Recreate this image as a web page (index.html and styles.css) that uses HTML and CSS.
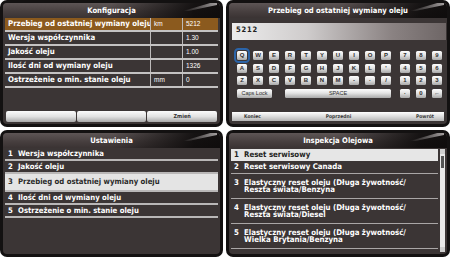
FILE: index.html
```html
<!DOCTYPE html>
<html lang="pl">
<head>
<meta charset="utf-8">
<title>Inspekcja olejowa</title>
<link rel="stylesheet" href="styles.css">
</head>
<body>
<div class="screen">
  <section class="panel">
    <div class="inner">
      <div class="title">Konfiguracja</div>
      <div class="table">
        <div class="trow sel"><span class="c-label">Przebieg od ostatniej wymiany oleju</span><span class="c-unit">km</span><span class="c-val">5212</span></div>
        <div class="trow"><span class="c-label">Wersja współczynnika</span><span class="c-unit"></span><span class="c-val">1.30</span></div>
        <div class="trow"><span class="c-label">Jakość oleju</span><span class="c-unit"></span><span class="c-val">1.00</span></div>
        <div class="trow"><span class="c-label">Ilość dni od wymiany oleju</span><span class="c-unit"></span><span class="c-val">1326</span></div>
        <div class="trow"><span class="c-label">Ostrzeżenie o min. stanie oleju</span><span class="c-unit">mm</span><span class="c-val">0</span></div>
      </div>
      <div class="btnbar"><span class="btn"></span><span class="btn"></span><span class="btn">Zmień</span></div>
    </div>
  </section>

  <section class="panel">
    <div class="inner">
      <div class="title">Przebieg od ostatniej wymiany oleju</div>
      <div class="input">5212</div>
      <div class="keyboard">
        <div class="letters">
          <span class="key focus">Q</span><span class="key">W</span><span class="key">E</span><span class="key">R</span><span class="key">T</span><span class="key">Y</span><span class="key">U</span><span class="key">I</span><span class="key">O</span><span class="key">P</span>
          <span class="key">A</span><span class="key">S</span><span class="key">D</span><span class="key">F</span><span class="key">G</span><span class="key">H</span><span class="key">J</span><span class="key">K</span><span class="key">L</span><span class="key">'</span>
          <span class="key">Z</span><span class="key">X</span><span class="key">C</span><span class="key">V</span><span class="key">B</span><span class="key">N</span><span class="key">M</span><span class="key">-</span><span class="key">·</span><span class="key">/</span>
          <span class="key caps">Caps Lock</span><span class="key space">SPACE</span>
        </div>
        <div class="numpad">
          <span class="key">7</span><span class="key">8</span><span class="key">9</span>
          <span class="key">4</span><span class="key">5</span><span class="key">6</span>
          <span class="key">1</span><span class="key">2</span><span class="key">3</span>
          <span class="key">·</span><span class="key">0</span><span class="key">←</span>
        </div>
      </div>
      <div class="navbar"><span>Koniec</span><span>Poprzedni</span><span>Powrót</span></div>
    </div>
  </section>

  <section class="panel">
    <div class="inner">
      <div class="title">Ustawienia</div>
      <ol class="menu">
        <li class="mrow"><span class="num">1</span>Wersja współczynnika</li>
        <li class="mrow"><span class="num">2</span>Jakość oleju</li>
        <li class="mrow sel"><span class="num">3</span>Przebieg od ostatniej wymiany oleju</li>
        <li class="mrow"><span class="num">4</span>Ilość dni od wymiany oleju</li>
        <li class="mrow"><span class="num">5</span>Ostrzeżenie o min. stanie oleju</li>
      </ol>
    </div>
  </section>

  <section class="panel">
    <div class="inner">
      <div class="title">Inspekcja Olejowa</div>
      <div class="listwrap">
        <ol class="ilist">
          <li class="irow sel"><div class="ibody"><span class="num">1</span><span>Reset serwisowy</span></div></li>
          <li class="irow"><div class="ibody"><span class="num">2</span><span>Reset serwisowy Canada</span></div></li>
          <li class="irow tall"><div class="ibody"><span class="num">3</span><span>Elastyczny reset oleju (Długa żywotność/<br>Reszta świata/Benzyna</span></div></li>
          <li class="irow tall"><div class="ibody"><span class="num">4</span><span>Elastyczny reset oleju (Długa żywotność/<br>Reszta świata/Diesel</span></div></li>
          <li class="irow tall"><div class="ibody"><span class="num">5</span><span>Elastyczny reset oleju (Długa żywotność/<br>Wielka Brytania/Benzyna</span></div></li>
        </ol>
        <div class="scrollbar"><span class="arrow up"></span><span class="thumb"></span><span class="track"></span><span class="arrow down"></span></div>
      </div>
    </div>
  </section>
</div>
</body>
</html>
```

FILE: styles.css
```css
* { box-sizing: border-box; margin: 0; padding: 0; }
html, body { background: #fff; }
body {
  width: 450px; height: 257px; overflow: hidden;
  font-family: "DejaVu Sans Condensed", "DejaVu Sans", sans-serif;
  font-weight: bold;
  color: #fff;
}
.screen {
  display: grid;
  grid-template-columns: 223px 224px;
  grid-template-rows: 127px 127px;
  gap: 3px;
}
.panel {
  background: #131111;
  border-radius: 7px;
  padding: 3px;
  display: flex;
  flex-direction: column;
}
.inner {
  flex: 1;
  background: #3b3535;
  border-radius: 4px;
  display: flex;
  flex-direction: column;
  overflow: hidden;
}
.title {
  height: 15px;
  flex: none;
  position: relative;
  color: #fff;
  font-size: 7.6px;
  line-height: 15px;
  text-align: center;
  white-space: nowrap;
  background:
    linear-gradient(to right, rgba(0,0,0,0) 50%, rgba(10,8,8,0.85) 88%, rgba(10,8,8,0.9) 100%),
    linear-gradient(to bottom, #5d5555 0%, #463e3e 60%, #3a3333 100%);
}
.title::after {
  content: "";
  position: absolute;
  right: 3px; top: 0;
  width: 34px; height: 8px;
  background: linear-gradient(to right, rgba(190,185,185,0) 0%, rgba(200,195,195,0.8) 100%);
  clip-path: polygon(0 100%, 80% 0, 100% 0, 100% 25%, 15% 100%);
}

/* Konfiguracja table */
.table { margin: 0 2px 0 2px; display: flex; flex-direction: column; }
.trow {
  display: grid;
  grid-template-columns: 146px 32px 1fr;
  height: 14px;
  border-bottom: 2px solid #c4c2c2;
  font-size: 7.8px;
  line-height: 12px;
  white-space: nowrap;
}
.trow > span { border-right: 1px solid #bdbaba; padding-left: 3px; overflow: hidden; }
.trow > span:last-child { border-right: none; }
.trow .c-unit, .trow .c-val { font-weight: normal; font-family: "Liberation Sans", sans-serif; font-size: 6.5px; }
.trow.sel { background: #8b5a1e; }
.btnbar {
  margin: auto 3px 2px 3px;
  display: grid;
  grid-template-columns: 1fr 1fr 1fr;
  gap: 1px;
  height: 11px;
}
.btn {
  background: linear-gradient(to bottom, #fbfbfb 0%, #e2e2e2 50%, #a9a9a9 100%);
  border-radius: 2px;
  color: #333;
  font-size: 5.5px;
  line-height: 11px;
  text-align: center;
}

/* keyboard panel */
.input {
  margin: 5px 1px 0 3px;
  height: 17px;
  flex: none;
  background: linear-gradient(to right, #ececec 0%, #cfcccc 35%, #8a8282 75%, #6e6666 100%);
  color: #222;
  font-size: 7.5px;
  letter-spacing: 0.8px;
  padding: 2px 0 0 4px;
  line-height: 9px;
}
.keyboard {
  margin: 11px 0 0 8px;
  display: flex;
  gap: 9px;
}
.letters {
  display: grid;
  grid-template-columns: repeat(10, 10px);
  grid-auto-rows: 9px;
  column-gap: 6px;
  row-gap: 3.5px;
}
.numpad {
  display: grid;
  grid-template-columns: repeat(3, 10px);
  grid-auto-rows: 9px;
  column-gap: 6px;
  row-gap: 3.5px;
}
.key {
  background: linear-gradient(to bottom, #fdfdfd 0%, #e4e4e4 45%, #a8a8a8 100%);
  border-radius: 1.5px;
  color: #2d2d2d;
  font-family: "Liberation Sans", sans-serif;
  font-size: 6px;
  line-height: 9px;
  text-align: center;
}
.key.focus { outline: 2px solid #2b64a8; outline-offset: 1px; }
.key.caps { grid-column: span 2; width: 35px; font-weight: normal; font-size: 5.5px; }
.key.space { grid-column: 4 / span 7; font-weight: normal; font-size: 5.5px; }
.navbar {
  margin: auto 3px 3px 3px;
  height: 9px;
  flex: none;
  display: flex;
  justify-content: space-between;
  padding: 0 10px 0 12px;
  background: linear-gradient(to bottom, #ffffff 0%, #dcdcdc 50%, #b4b4b4 100%);
  color: #3a3a3a;
  font-size: 5px;
  line-height: 9px;
}

/* Ustawienia menu */
.menu { list-style: none; margin: 0 2px; }
.mrow {
  height: 13px;
  border-bottom: 2px solid #b9b7b7;
  font-size: 7.7px;
  line-height: 11px;
  padding-left: 3px;
  white-space: nowrap;
}
.mrow .num { display: inline-block; width: 10px; }
.mrow.sel { height: 18px; line-height: 16px; background: #e4e4e4; color: #2a2a2a; }

/* Inspekcja list */
.listwrap { display: flex; flex: 1; margin: 1px 2px 2px 2px; }
.ilist { list-style: none; flex: 1; }
.irow {
  display: flex;
  align-items: center;
  height: 12px;
  border-bottom: 1px solid #a9a6a6;
  font-size: 7.8px;
  line-height: 7.5px;
  padding-left: 3px;
  white-space: nowrap;
}
.ibody { display: flex; align-items: flex-start; }
.irow .num { width: 10px; flex: none; }
.irow.sel { background: #e6e6e6; color: #222; border-bottom: none; }
.irow:nth-child(2) { height: 13px; }
.irow.tall { height: 25px; }
.scrollbar {
  width: 5px;
  margin-left: 2px;
  display: flex;
  flex-direction: column;
  background: #e8e8e8;
}
.scrollbar .arrow { height: 5px; flex: none; background: #cfcfcf; }
.scrollbar .thumb { height: 12px; flex: none; background: #555; margin: 2px 1px 0 1px; }
.scrollbar .track { flex: 1; }
```
